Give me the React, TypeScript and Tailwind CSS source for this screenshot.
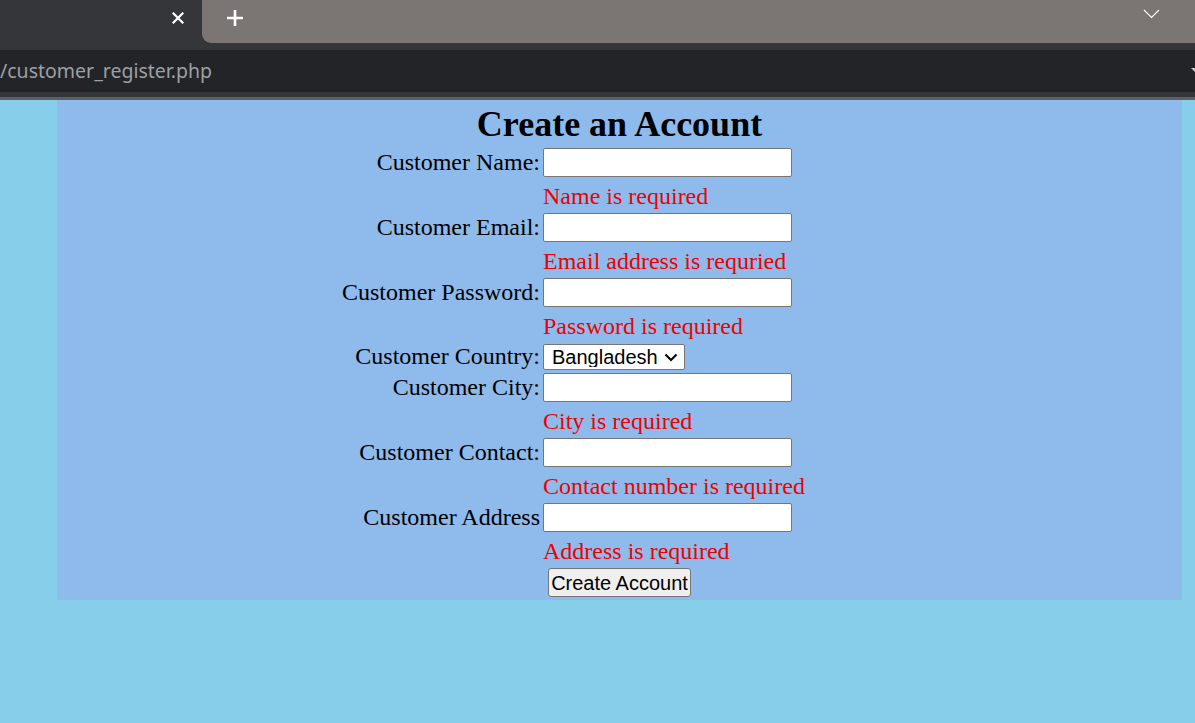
import React from "react";

const fields = [
  { label: "Customer Name:", error: "Name is required" },
  { label: "Customer Email:", error: "Email address is requried" },
  { label: "Customer Password:", error: "Password is required" },
  { label: "Customer Country:", select: true },
  { label: "Customer City:", error: "City is required" },
  { label: "Customer Contact:", error: "Contact number is required" },
  { label: "Customer Address", error: "Address is required" },
];

function BrowserChrome() {
  return (
    <div className="bg-[#35363a]">
      {/* tab strip */}
      <div className="flex h-[43px]">
        <div className="flex w-[202px] items-center justify-end pr-[18px]">
          <svg width="12" height="12" viewBox="0 0 12 12" className="mt-[-7px]">
            <path d="M1.5 1.5 L10.5 10.5 M10.5 1.5 L1.5 10.5" stroke="#fff" strokeWidth="2.2" strokeLinecap="square" />
          </svg>
        </div>
        <div className="flex flex-1 items-start rounded-bl-[9px] bg-[#7b7574]">
          <svg width="18" height="18" viewBox="0 0 18 18" className="ml-[24px] mt-[9px]">
            <path d="M9 1 V17 M1 9 H17" stroke="#fff" strokeWidth="2.6" />
          </svg>
          <div className="flex-1" />
          <svg width="17" height="10" viewBox="0 0 17 10" className="mr-[35px] mt-[9px]">
            <path d="M1 1 L8.5 8.5 L16 1" stroke="#fff" strokeWidth="1.2" fill="none" />
          </svg>
        </div>
      </div>
      <div className="h-[7px]" />
      {/* address bar */}
      <div className="flex h-[42px] items-center justify-between bg-[#232427]">
        <span className="font-['Noto_Sans'] text-[19.5px] leading-none text-[#9aa0a6]">
          /customer_register.php
        </span>
        <svg width="4" height="6" viewBox="0 0 4 6" className="mt-[-3px]">
          <path d="M0 1 H4 V5 Z" fill="#c8c8c8" />
        </svg>
      </div>
      <div className="h-[5px]" />
      <div className="h-[3px] bg-[#5d5f63]" />
    </div>
  );
}

export default function App() {
  return (
    <div className="min-h-[723px] bg-[#87ceeb] font-['Liberation_Serif',serif] text-black">
      <BrowserChrome />
      <div className="ml-[57px] w-[1125px] bg-[#8ebbec] h-[500px] flex flex-col">
        <h1 className="h-[48px] text-center text-[36px] font-bold leading-[48px]">Create an Account</h1>

        <div className="ml-[286px] grid grid-cols-[197px_262px] gap-x-[3px]">
          {fields.map((f) => (
            <React.Fragment key={f.label}>
              <div className="flex h-[30px] items-start justify-end">
                <span className={`flex items-center text-[24px] leading-none whitespace-nowrap ${f.select ? "h-[26px]" : "h-[27px]"}`}>
                  {f.label}
                </span>
              </div>
              <div className="h-[30px]">
                {f.select ? (
                  <div className="relative mt-[1px] w-[142px]">
                    <select className="h-[26px] w-[142px] appearance-none rounded-[2px] border border-[#767676] bg-white pl-[8px] font-['Liberation_Sans',sans-serif] text-[20px] leading-none text-black outline-none">
                      <option>Bangladesh</option>
                    </select>
                    <svg width="14" height="9" viewBox="0 0 14 9" className="pointer-events-none absolute right-[7px] top-[9px]">
                      <path d="M1.5 1.5 L7 7 L12.5 1.5" stroke="#000" strokeWidth="2" fill="none" />
                    </svg>
                  </div>
                ) : (
                  <input type="text" className="h-[29px] w-[249px] rounded-[2px] border border-[#767676] bg-white outline-none" />
                )}
              </div>
              {f.error && (
                <>
                  <div className="h-[35px]" />
                  <div className="flex h-[35px] items-center whitespace-nowrap text-[24px] leading-none text-[#ee0000]">
                    {f.error}
                  </div>
                </>
              )}
            </React.Fragment>
          ))}
        </div>

        <div className="flex justify-center">
          <button className="h-[29px] w-[143px] rounded-[3px] border border-[#767676] bg-[#efefef] font-['Liberation_Sans',sans-serif] text-[20px] leading-none text-black">
            Create Account
          </button>
        </div>
      </div>
    </div>
  );
}
